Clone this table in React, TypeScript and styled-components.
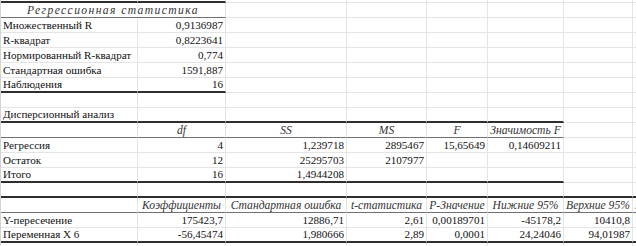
import React from "react";
import styled, { createGlobalStyle } from "styled-components";

const GlobalStyle = createGlobalStyle`
  html, body {
    margin: 0;
    padding: 0;
    background: #ffffff;
  }
  body {
    font-family: "Liberation Serif", "Times New Roman", serif;
  }
`;

type Edge = "grid" | "thick" | "thin";
type Align = "left" | "right" | "center";

interface CellDef {
  text?: string;
  align?: Align;
  italic?: boolean;
  edge?: Edge;
  span?: number;
  wide?: boolean;
}

const COLS = [137, 88, 121, 80, 61, 76, 69, 66];

const Sheet = styled.div`
  width: 636px;
  height: 246px;
  overflow: hidden;
  border-left: 1px solid #d4d4d4;
  box-sizing: border-box;
  display: grid;
  grid-template-columns: ${COLS.map((c) => `${c}px`).join(" ")};
  grid-template-rows: 3px;
  grid-auto-rows: 15px;
  font-size: 11.1px;
  color: #111111;
`;

const edgeStyle = (e: Edge | undefined) => {
  switch (e) {
    case "thick":
      return "border-bottom: 2px solid #2e2e2e;";
    case "thin":
      return "border-bottom: 1px solid #707070;";
    default:
      return "border-bottom: 1px solid #e4e4e4;";
  }
};

const Cell = styled.div<{ $align?: Align; $italic?: boolean; $edge?: Edge; $span?: number; $wide?: boolean }>`
  box-sizing: border-box;
  min-width: 0;
  overflow: hidden;
  white-space: nowrap;
  border-right: 1px solid #e4e4e4;
  ${(p) => edgeStyle(p.$edge)}
  grid-column: span ${(p) => p.$span ?? 1};
  display: flex;
  align-items: flex-end;
  justify-content: ${(p) =>
    p.$align === "right" ? "flex-end" : p.$align === "center" ? "center" : "flex-start"};
  padding: 0 2px 0 2px;
  line-height: 13px;
  font-style: ${(p) => (p.$italic ? "italic" : "normal")};
  font-size: ${(p) => (p.$italic ? "11.6px" : "inherit")};
  letter-spacing: ${(p) => (p.$wide ? "1.4px" : "normal")};
  color: ${(p) => (p.$italic ? "#333333" : "#111111")};
`;

const L = (text: string, edge?: Edge): CellDef => ({ text, align: "left", edge });
const R = (text: string, edge?: Edge): CellDef => ({ text, align: "right", edge });
const H = (text: string, edge: Edge = "thin"): CellDef => ({ text, align: "center", italic: true, edge });
const E = (edge?: Edge): CellDef => ({ edge });

const fill = (cells: CellDef[]): CellDef[] => {
  const used = cells.reduce((n, c) => n + (c.span ?? 1), 0);
  return [...cells, ...Array.from({ length: COLS.length - used }, () => E())];
};

const stat = (label: string, value: string, edge?: Edge) => fill([L(label, edge), R(value, edge)]);
const anova = (cells: CellDef[], edge?: Edge) =>
  fill(cells.map((c) => ({ ...c, edge: edge ?? c.edge })));

const ROWS: CellDef[][] = [
  fill([E("thick"), E("thick")]),
  fill([{ text: "Регрессионная статистика", align: "center", italic: true, edge: "thin", span: 2, wide: true }]),
  stat("Множественный R", "0,9136987"),
  stat("R-квадрат", "0,8223641"),
  stat("Нормированный R-квадрат", "0,774"),
  stat("Стандартная ошибка", "1591,887"),
  stat("Наблюдения", "16", "thick"),
  fill([]),
  anova([L("Дисперсионный анализ"), E(), E(), E(), E(), E()], "thick"),
  anova([E(), H("df"), H("SS"), H("MS"), H("F"), H("Значимость F")], "thin"),
  anova([L("Регрессия"), R("4"), R("1,239718"), R("2895467"), R("15,65649"), R("0,14609211")]),
  anova([L("Остаток"), R("12"), R("25295703"), R("2107977"), E(), E()]),
  anova([L("Итого"), R("16"), R("1,4944208"), E(), E(), E()], "thick"),
  Array.from({ length: COLS.length }, () => E("thick")),
  [
    E("thin"),
    H("Коэффициенты"),
    H("Стандартная ошибка"),
    H("t-статистика"),
    H("P-Значение"),
    H("Нижние 95%"),
    H("Верхние 95%"),
    { text: "Нижние 95,0%", align: "left", italic: true, edge: "thin" },
  ],
  [
    L("Y-пересечение"),
    R("175423,7"),
    R("12886,71"),
    R("2,61"),
    R("0,00189701"),
    R("-45178,2"),
    R("10410,8"),
    E(),
  ],
  [
    L("Переменная X 6", "thick"),
    R("-56,45474", "thick"),
    R("1,980666", "thick"),
    R("2,89", "thick"),
    R("0,0001", "thick"),
    R("24,24046", "thick"),
    R("94,01987", "thick"),
    E("thick"),
  ],
  fill([]),
];

export default function App() {
  return (
    <>
      <GlobalStyle />
      <Sheet>
        {ROWS.map((row, ri) =>
          row.map((c, ci) => (
            <Cell
              key={`${ri}-${ci}`}
              $align={c.align}
              $italic={c.italic}
              $edge={c.edge}
              $span={c.span}
              $wide={c.wide}
            >
              {c.text}
            </Cell>
          ))
        )}
      </Sheet>
    </>
  );
}
